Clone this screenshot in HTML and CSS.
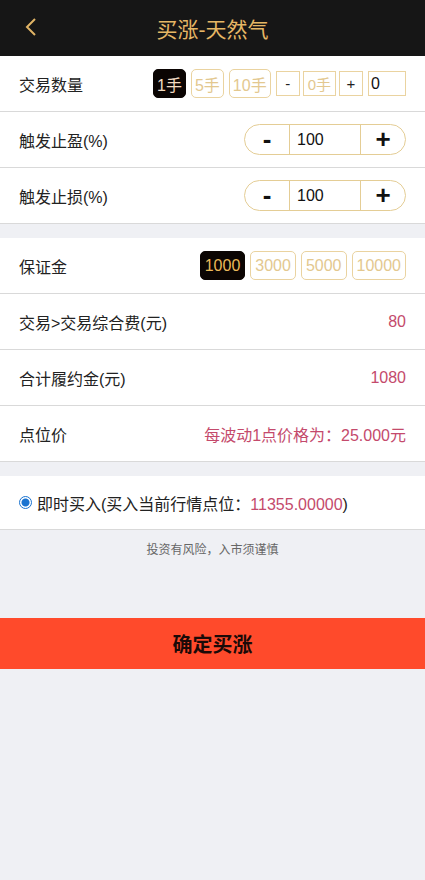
FILE: index.html
```html
<!DOCTYPE html>
<html lang="zh">
<head>
<meta charset="utf-8">
<link rel="stylesheet" href="styles.css">
</head>
<body>
<header class="topbar">
  <svg class="back" width="14" height="20" viewBox="0 0 14 20"><path d="M11 2 L3 10 L11 18" fill="none" stroke="#e0b466" stroke-width="2"/></svg>
  <h1 class="title">买涨-天然气</h1>
</header>

<section class="group">
  <div class="row">
    <span class="label">交易数量</span>
    <div class="lots">
      <span class="chip chip-on">1手</span>
      <span class="chip">5手</span>
      <span class="chip">10手</span>
      <span class="box box-op">-</span>
      <span class="box">0手</span>
      <span class="box box-op">+</span>
      <span class="box box-input">0</span>
    </div>
  </div>
  <div class="row">
    <span class="label">触发止盈(%)</span>
    <div class="stepper">
      <span class="step-btn">-</span>
      <span class="step-val">100</span>
      <span class="step-btn">+</span>
    </div>
  </div>
  <div class="row">
    <span class="label">触发止损(%)</span>
    <div class="stepper">
      <span class="step-btn">-</span>
      <span class="step-val">100</span>
      <span class="step-btn">+</span>
    </div>
  </div>
</section>

<section class="group">
  <div class="row">
    <span class="label">保证金</span>
    <div class="deposits">
      <span class="dchip dchip-on">1000</span>
      <span class="dchip">3000</span>
      <span class="dchip">5000</span>
      <span class="dchip">10000</span>
    </div>
  </div>
  <div class="row">
    <span class="label">交易&gt;交易综合费(元)</span>
    <span class="value">80</span>
  </div>
  <div class="row">
    <span class="label">合计履约金(元)</span>
    <span class="value">1080</span>
  </div>
  <div class="row">
    <span class="label">点位价</span>
    <span class="value">每波动1点价格为：25.000元</span>
  </div>
</section>

<section class="group">
  <div class="row row-radio">
    <span class="radio"></span>
    <span class="label">即时买入(买入当前行情点位：<span class="pink">11355.00000</span>)</span>
  </div>
</section>

<p class="risk">投资有风险，入市须谨慎</p>

<button class="confirm">确定买涨</button>
</body>
</html>
```

FILE: styles.css
```css
* { box-sizing: border-box; }
html, body {
  margin: 0;
  padding: 0;
  background: #eff0f4;
  font-family: "Liberation Sans", Arial, "Noto Sans CJK SC", sans-serif;
  color: #222;
}
.topbar {
  height: 56px;
  background: #161616;
  display: flex;
  align-items: center;
  justify-content: center;
  position: relative;
}
.back {
  position: absolute;
  left: 24px;
  top: 17px;
}
.title {
  margin: 0;
  font-size: 21px;
  font-weight: normal;
  color: #e6b765;
}
.group {
  background: #fff;
  margin-bottom: 14px;
}
.group:last-of-type { margin-bottom: 0; }
.row {
  height: 56px;
  display: flex;
  align-items: center;
  justify-content: space-between;
  padding: 0 19px;
  border-bottom: 1px solid #d9d9d9;
}
.label {
  font-size: 16px;
  color: #222;
}
.lots {
  display: flex;
  align-items: center;
}
.chip {
  height: 29px;
  padding: 0 3px;
  border: 1px solid #ead3a0;
  border-radius: 5px;
  font-size: 16px;
  color: #e3c88f;
  display: flex;
  align-items: center;
  margin-right: 5px;
}
.chip-on {
  background: #0b0503;
  color: #f3dcc3;
  border-color: #0b0503;
}
.box {
  height: 25px;
  border: 1px solid #ead3a0;
  font-size: 15px;
  color: #e3c88f;
  display: flex;
  align-items: center;
  justify-content: center;
  padding: 0 4px;
  margin-right: 3px;
}
.box-op {
  width: 24px;
  color: #222;
}
.box-input {
  width: 38px;
  justify-content: flex-start;
  padding: 0 2px;
  color: #111;
  font-size: 16px;
  margin-left: 2px;
  margin-right: 0;
}
.stepper {
  width: 162px;
  height: 31px;
  border: 1px solid #e4cd95;
  border-radius: 16px;
  display: flex;
  align-items: stretch;
}
.step-btn {
  width: 44px;
  display: flex;
  align-items: center;
  justify-content: center;
  font-size: 26px;
  font-weight: bold;
  color: #111;
}
.step-val {
  flex: 1;
  border-left: 1px solid #e4cd95;
  border-right: 1px solid #e4cd95;
  display: flex;
  align-items: center;
  padding-left: 7px;
  font-size: 16px;
  color: #111;
}
.deposits {
  display: flex;
  gap: 5px;
}
.dchip {
  height: 29px;
  padding: 0 4px;
  border: 1px solid #ead3a0;
  border-radius: 5px;
  font-size: 16px;
  color: #e3c88f;
  display: flex;
  align-items: center;
}
.dchip-on {
  background: #0b0503;
  border-color: #0b0503;
  color: #eab95a;
}
.value {
  font-size: 16px;
  color: #c44a6c;
}
.row-radio {
  justify-content: flex-start;
  height: 54px;
}
.radio {
  width: 13px;
  height: 13px;
  border-radius: 50%;
  border: 1px solid #1a73d0;
  background: radial-gradient(circle, #1a73d0 0 3.5px, #fff 4.5px);
  margin-right: 5px;
  flex: none;
}
.pink { color: #c44a6c; }
.risk {
  margin: 11px 0 0;
  text-align: center;
  font-size: 12px;
  color: #666;
  height: 18px;
  line-height: 18px;
}
.confirm {
  display: block;
  width: 100%;
  height: 51px;
  margin-top: 59px;
  border: none;
  background: #ff4a2b;
  font-family: inherit;
  font-size: 20px;
  font-weight: bold;
  color: #1a0a08;
}
```
